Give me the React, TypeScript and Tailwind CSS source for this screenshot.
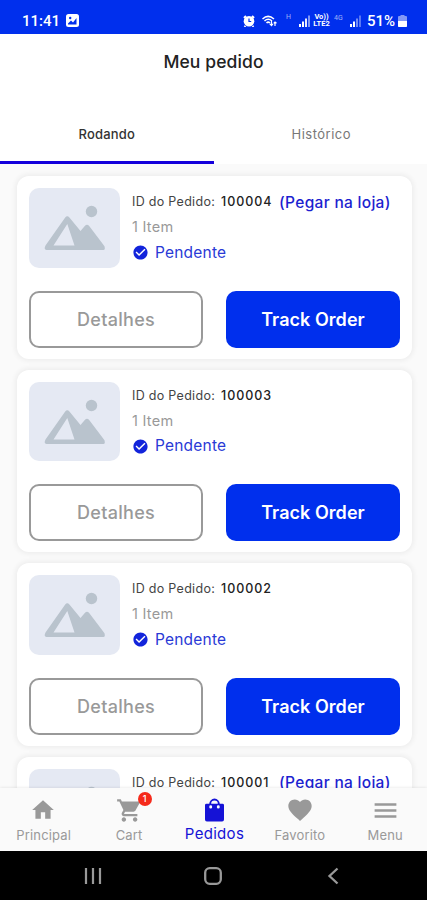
import type { ReactNode } from "react";
import { MdCheckCircle, MdFavorite, MdHome, MdMenu, MdShoppingCart } from "react-icons/md";

type Pedido = { id: string; pegarNaLoja?: boolean };

const pedidos: Pedido[] = [
  { id: "100004", pegarNaLoja: true },
  { id: "100003" },
  { id: "100002" },
  { id: "100001", pegarNaLoja: true },
];

export default function App() {
  return (
    <div className="flex h-[900px] w-[427px] flex-col overflow-hidden bg-[#fafafa] font-[Inter,Roboto,sans-serif]">
      <StatusBar />
      <header className="flex h-[71px] shrink-0 justify-center bg-white pt-4 text-[#222]">
        <h1 className="text-[17.5px] leading-6 font-medium tracking-[0.1px]">Meu pedido</h1>
      </header>
      <Abas />
      <main className="min-h-0 flex-1 overflow-hidden pt-3 pr-[15px] pl-[17px]">
        <div className="flex flex-col gap-[11px]">
          {pedidos.map((p) => (
            <CartaoPedido key={p.id} pedido={p} />
          ))}
        </div>
      </main>
      <MenuInferior />
      <BarraAndroid />
    </div>
  );
}

function StatusBar() {
  return (
    <div className="flex h-[34px] shrink-0 items-center bg-[#002fed] pt-[7px] pr-5 pl-[22px] font-[Roboto,sans-serif] text-white">
      <span className="w-[37px] text-[15px] leading-4 font-medium">11:41</span>
      <svg width="13" height="13" viewBox="0 0 13 13" className="ml-[7px]">
        <rect width="13" height="13" rx="2.5" fill="currentColor" />
        <path d="M2 9.5 5 6.5l2 2L10.5 4v6.5H2z" fill="#002fed" />
        <circle cx="4.2" cy="4" r="1.2" fill="#002fed" />
      </svg>
      <div className="flex-1" />
      <svg width="12" height="12" viewBox="0 0 12 12" className="mr-[7px]">
        <path d="M1 3 3 1M9 1l2 2M2.5 11l-1 1M9.5 11l1 1" stroke="currentColor" strokeWidth="2" />
        <circle cx="6" cy="6.3" r="5.3" fill="currentColor" />
        <path d="M6 3.5v3h2.2" stroke="#002fed" strokeWidth="1.2" fill="none" />
      </svg>
      <svg width="15" height="12" viewBox="0 0 15 12" fill="none" stroke="currentColor" strokeWidth="1.5">
        <path d="M.5 4Q6-1.2 12 4M2.5 6Q6.2 2.6 10 6M4.5 8Q6.2 6.3 8 8" />
        <path d="M9.5 6v4.5m-1.7-1.7 1.7 1.7 1.4-1.7M13 11V7m-1.3 1.3L13 7l1.5 1.3" strokeWidth="1.2" />
      </svg>
      <span className="mr-[7px] ml-[9px] -mt-2 w-[6px] text-[7px] leading-[8px] opacity-60">H</span>
      <Sinal barras={4} />
      <span className="ml-[2px] w-[17px] text-center text-[7.5px] font-bold">
        <span className="block h-[6px] leading-[6px]">Vo))</span>
        <span className="block h-[7px] leading-[7px]">LTE2</span>
      </span>
      <span className="mr-[6px] ml-[4px] -mt-[6px] w-[10px] text-[7px] leading-[8px] opacity-60">4G</span>
      <Sinal barras={2} />
      <span className="ml-[5px] w-[31px] text-[15px] leading-4 font-medium">51%</span>
      <svg width="9" height="12" viewBox="0 0 9 12">
        <path d="M2.5 0h4v1H8a1 1 0 0 1 1 1v9a1 1 0 0 1-1 1H1a1 1 0 0 1-1-1V2a1 1 0 0 1 1-1h1.500z" fill="#8298f6" />
        <path d="M0 6h9v5a1 1 0 0 1-1 1H1a1 1 0 0 1-1-1z" fill="white" />
      </svg>
    </div>
  );
}

function Sinal({ barras }: { barras: number }) {
  return (
    <svg width="12" height="12" viewBox="0 0 12 12" fill="currentColor">
      <rect y="9" width="2" height="3" />
      <rect x="3" y="6.500" width="2" height="5.500" />
      <rect x="6" y="3.500" width="2" height="8.500" opacity={barras > 2 ? 0.9 : 0.45} />
      <rect x="9" y="0.500" width="2" height="11.500" opacity={barras > 2 ? 0.5 : 0.35} />
    </svg>
  );
}

function Abas() {
  return (
    <div className="flex h-[59px] shrink-0 bg-white text-[13px]">
      <button className="w-1/2 border-b-[3px] border-[#1500dc] pt-1 font-medium tracking-[0.15px] text-[#333]">
        Rodando
      </button>
      <button className="w-1/2 border-b-[3px] border-transparent pt-1 pl-[2px] tracking-[0.5px] text-[#777]">
        Histórico
      </button>
    </div>
  );
}

function CartaoPedido({ pedido }: { pedido: Pedido }) {
  return (
    <article className="h-[182.600px] shrink-0 rounded-[12px] bg-white px-3 pt-3 shadow-[0_0_5px_2px_rgba(0,0,0,0.05)]">
      <div className="flex h-20">
        <div className="h-[79.500px] w-[91px] shrink-0 rounded-[10px] bg-[#e5e9f3]">
          <ImagemVazia />
        </div>
        <div className="ml-3 min-w-0 flex-1 pt-1 whitespace-nowrap">
          <div className="flex h-5 items-center leading-5">
            <span className="w-[89px] text-[12.500px] tracking-[0.3px] text-[#444]">ID do Pedido:</span>
            <span className="w-[58px] text-[12.500px] font-medium tracking-[0.95px] text-[#222]">{pedido.id}</span>
            {pedido.pegarNaLoja && (
              <span className="mt-[1px] text-[15.500px] font-medium tracking-[0.3px] text-[#1c1fd0]">(Pegar na loja)</span>
            )}
          </div>
          <p className="mt-[5px] text-[14.500px] leading-5 tracking-[0.25px] text-[#999]">1 Item</p>
          <p className="mt-[5.500px] flex items-center text-[15.500px] leading-5 tracking-[0.2px] text-[#2a39d6]">
            <MdCheckCircle className="size-[17px] text-[#1224db]" />
            <span className="ml-[6px]">Pendente</span>
          </p>
        </div>
      </div>
      <div className="mt-[22.500px] flex gap-[23px]">
        <button className="h-[57px] w-[174px] rounded-[10px] border-2 border-[#999] text-[18px] font-medium tracking-[0.3px] text-[#999]">
          Detalhes
        </button>
        <button className="h-[57px] w-[174px] rounded-[10px] bg-[#002fed] text-[18px] font-semibold tracking-[0.05px] text-white">
          Track Order
        </button>
      </div>
    </article>
  );
}

function ImagemVazia() {
  return (
    <svg width="91" height="80" viewBox="0 0 91 80" fill="#b9c3cd">
      <circle cx="62.500" cy="23.500" r="5.700" />
      <path
        fillRule="evenodd"
        d="M36.200 29.500q2-2.300 4.200 0L51.500 43l4.500-5.300q2-2 4 0l15.500 20.500q1 3.800-1 3.800H17.500q-3-.5-1-4.500zM38.300 36 24.500 57.500h21z"
      />
    </svg>
  );
}

function MenuInferior() {
  return (
    <nav className="relative z-10 flex h-[63px] shrink-0 bg-[#fafafa] pl-[1px] text-[#999] shadow-[0_0_3px_rgba(0,0,0,0.12)]">
      <Item icone={<MdHome className="mr-[2px] size-[26px]" />} rotulo="Principal" />
      <Item
        icone={
          <span className="relative">
            <MdShoppingCart className="size-[27px]" />
            <span className="absolute -top-[5px] -right-[9px] flex size-[14px] items-center justify-center rounded-full bg-[#f52a1b] text-[9px] leading-none font-medium text-white">
              1
            </span>
          </span>
        }
        rotulo="Cart"
      />
      <Item icone={<Sacola />} rotulo="Pedidos" ativo />
      <Item icone={<MdFavorite className="size-[28px]" />} rotulo="Favorito" />
      <Item icone={<MdMenu className="size-[29px]" />} rotulo="Menu" />
    </nav>
  );
}

function Item({ icone, rotulo, ativo }: { icone: ReactNode; rotulo: string; ativo?: boolean }) {
  return (
    <button className={`flex w-[85.400px] shrink-0 flex-col items-center pt-2 ${ativo ? "text-[#1512d6]" : ""}`}>
      <span className="flex h-[28px] items-center">{icone}</span>
      <span
        className={
          ativo ? "text-[15px] leading-5 tracking-[0.3px]" : "mt-[1px] text-[13px] leading-5 tracking-[0.15px]"
        }
      >
        {rotulo}
      </span>
    </button>
  );
}

function Sacola() {
  return (
    <svg width="19" height="24" viewBox="0 0 20 25">
      <path d="M5.500 9V6a4.500 4.500 0 0 1 9 0v3" fill="none" stroke="currentColor" strokeWidth="2" />
      <path d="M1.500 6h17A1.500 1.500 0 0 1 20 7.500v15a2 2 0 0 1-2 2H2a2 2 0 0 1-2-2v-15A1.500 1.500 0 0 1 1.500 6" fill="currentColor" />
      <path d="M6 9v.5M14 9v.5" stroke="white" strokeWidth="3" strokeLinecap="round" />
    </svg>
  );
}

function BarraAndroid() {
  return (
    <div className="flex h-[49px] shrink-0 items-center bg-black pl-[84px] text-[#999]">
      <svg width="18" height="18" viewBox="0 0 18 18" fill="none" stroke="currentColor" strokeWidth="2.200">
        <path d="M2 1v16M9 1v16M16 1v16" />
      </svg>
      <svg width="18" height="18" viewBox="0 0 18 18" fill="none" stroke="currentColor" strokeWidth="2.300" className="ml-[102px]">
        <rect x="1.200" y="1.200" width="15.600" height="15.600" rx="4.500" />
      </svg>
      <svg width="12" height="18" viewBox="0 0 12 18" fill="none" stroke="currentColor" strokeWidth="2.300" className="ml-[105px]">
        <path d="M10.500 1.500 2.500 9l8 7.500" />
      </svg>
    </div>
  );
}
